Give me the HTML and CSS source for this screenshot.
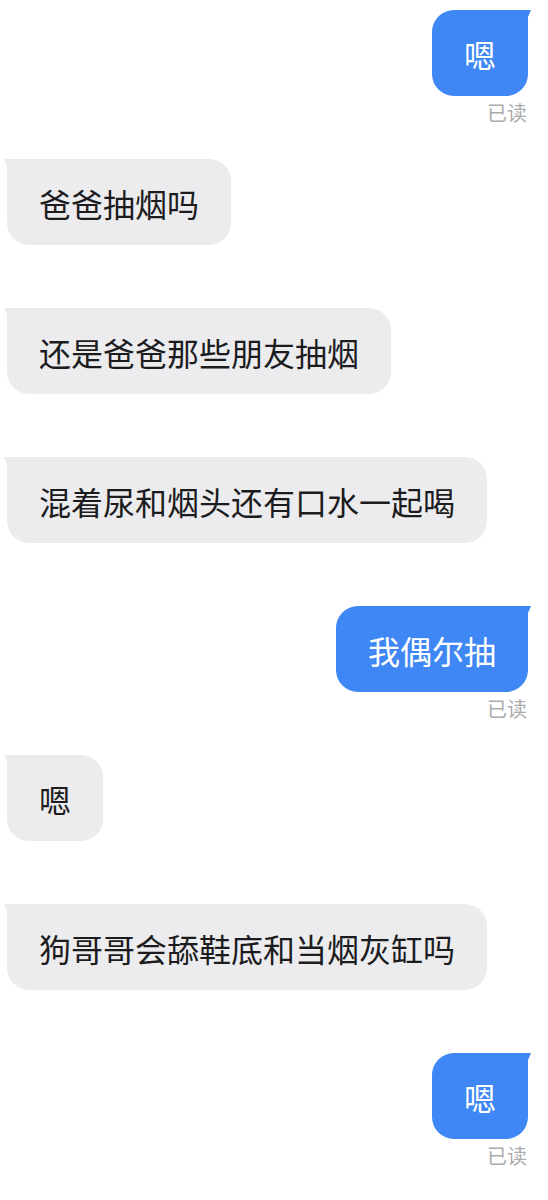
FILE: index.html
```html
<!DOCTYPE html>
<html lang="zh-CN">
<head>
    <meta charset="UTF-8">
    <meta name="viewport" content="width=device-width, initial-scale=1.0">
    <title>聊天</title>
    <link rel="stylesheet" href="styles.css">
</head>
<body>
    <div class="chat">
        <div class="msg mine">
            <div class="bubble">嗯</div>
            <div class="read">已读</div>
        </div>
        <div class="msg theirs">
            <div class="bubble">爸爸抽烟吗</div>
        </div>
        <div class="msg theirs">
            <div class="bubble">还是爸爸那些朋友抽烟</div>
        </div>
        <div class="msg theirs">
            <div class="bubble">混着尿和烟头还有口水一起喝</div>
        </div>
        <div class="msg mine">
            <div class="bubble">我偶尔抽</div>
            <div class="read">已读</div>
        </div>
        <div class="msg theirs">
            <div class="bubble">嗯</div>
        </div>
        <div class="msg theirs">
            <div class="bubble">狗哥哥会舔鞋底和当烟灰缸吗</div>
        </div>
        <div class="msg mine">
            <div class="bubble">嗯</div>
            <div class="read">已读</div>
        </div>
    </div>
</body>
</html>
```

FILE: styles.css
```css
body {
    margin: 0;
    background-color: #fff;
    font-family: "Noto Sans CJK SC", "Noto Sans", sans-serif;
}

.chat {
    display: flex;
    flex-direction: column;
    padding: 10px 20px 0 7px;
}

.msg {
    display: flex;
    flex-direction: column;
    margin-bottom: 63px;
}

.msg.mine {
    align-items: flex-end;
    margin-bottom: 35px;
}

.msg.theirs {
    align-items: flex-start;
}

.bubble {
    position: relative;
    font-size: 32px;
    line-height: 32px;
    padding: 28px 32px 26px;
    border-radius: 22px;
    white-space: nowrap;
}

.mine .bubble {
    background-color: #3f87f4;
    color: #fff;
    border-top-right-radius: 2px;
}

.theirs .bubble {
    background-color: #ececef;
    color: #1c1c1e;
    border-top-left-radius: 2px;
}

/* little tail at the top corner */
.bubble::after {
    content: "";
    position: absolute;
    top: 0;
    width: 7px;
    height: 9px;
}

.mine .bubble::after {
    right: -3px;
    background-color: #3f87f4;
    clip-path: polygon(0 0, 100% 0, 45% 100%, 0 100%);
}

.theirs .bubble::after {
    left: -3px;
    background-color: #ececef;
    clip-path: polygon(0 0, 100% 0, 100% 100%, 55% 100%);
}

.read {
    margin-top: 6px;
    margin-right: 1px;
    font-size: 20px;
    line-height: 22px;
    color: #ababab;
}
```
